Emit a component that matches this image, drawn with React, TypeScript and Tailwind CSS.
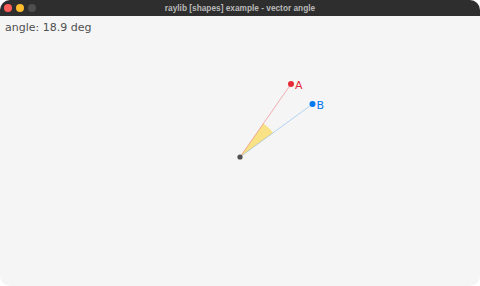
import React from 'react';

const cx = 240;
const cy = 141; // relative to canvas (title bar is 16px)
const A = { x: 291, y: 68 };
const B = { x: 312.5, y: 88 };

function sectorPath(r: number) {
    const a1 = Math.atan2(A.y - cy, A.x - cx);
    const a2 = Math.atan2(B.y - cy, B.x - cx);
    const p1 = { x: cx + r * Math.cos(a1), y: cy + r * Math.sin(a1) };
    const p2 = { x: cx + r * Math.cos(a2), y: cy + r * Math.sin(a2) };
    return `M ${cx} ${cy} L ${p1.x} ${p1.y} A ${r} ${r} 0 0 1 ${p2.x} ${p2.y} Z`;
}

export default function App() {
    return (
        <div className="w-[480px] h-[286px] bg-white">
            <div className="w-full h-full flex flex-col rounded-[10px] overflow-hidden">
                <div className="h-[16px] bg-[#2e2e2e] flex items-center relative shrink-0">
                    <div className="flex items-center gap-[4px] pl-[4px]">
                        <span className="w-[8px] h-[8px] rounded-full bg-[#fe5f57]" />
                        <span className="w-[8px] h-[8px] rounded-full bg-[#febc2e]" />
                        <span className="w-[8px] h-[8px] rounded-full bg-[#4e4e4e]" />
                    </div>
                    <div className="absolute inset-0 flex items-center justify-center text-[8.3px] font-bold text-[#b9b9b9] font-['Liberation_Sans',sans-serif]">
                        raylib [shapes] example - vector angle
                    </div>
                </div>
                <div className="flex-1 bg-[#f5f5f5] relative">
                    <div className="pl-[5px] pt-[6px] text-[11px] leading-[12px] text-[#505050] font-['DejaVu_Sans',sans-serif]">
                        angle: 18.9 deg
                    </div>
                    <svg className="absolute inset-0" width="480" height="270" viewBox="0 0 480 270">
                        <path d={sectorPath(41)} fill="#ffcb00" fillOpacity="0.45" />
                        <line x1={cx} y1={cy} x2={A.x} y2={A.y} stroke="#e62937" strokeOpacity="0.45" strokeWidth="0.8" />
                        <line x1={cx} y1={cy} x2={B.x} y2={B.y} stroke="#0079f1" strokeOpacity="0.35" strokeWidth="0.8" />
                        <circle cx={cx} cy={cy} r="2.6" fill="#505050" />
                        <circle cx={A.x} cy={A.y} r="3" fill="#e62937" />
                        <circle cx={B.x} cy={B.y} r="3" fill="#0079f1" />
                        <text x={A.x + 4} y={A.y + 5} fontSize="11" fill="#e62937" fontFamily="DejaVu Sans, sans-serif">A</text>
                        <text x={B.x + 4} y={B.y + 5} fontSize="11" fill="#0079f1" fontFamily="DejaVu Sans, sans-serif">B</text>
                    </svg>
                </div>
            </div>
        </div>
    );
}
